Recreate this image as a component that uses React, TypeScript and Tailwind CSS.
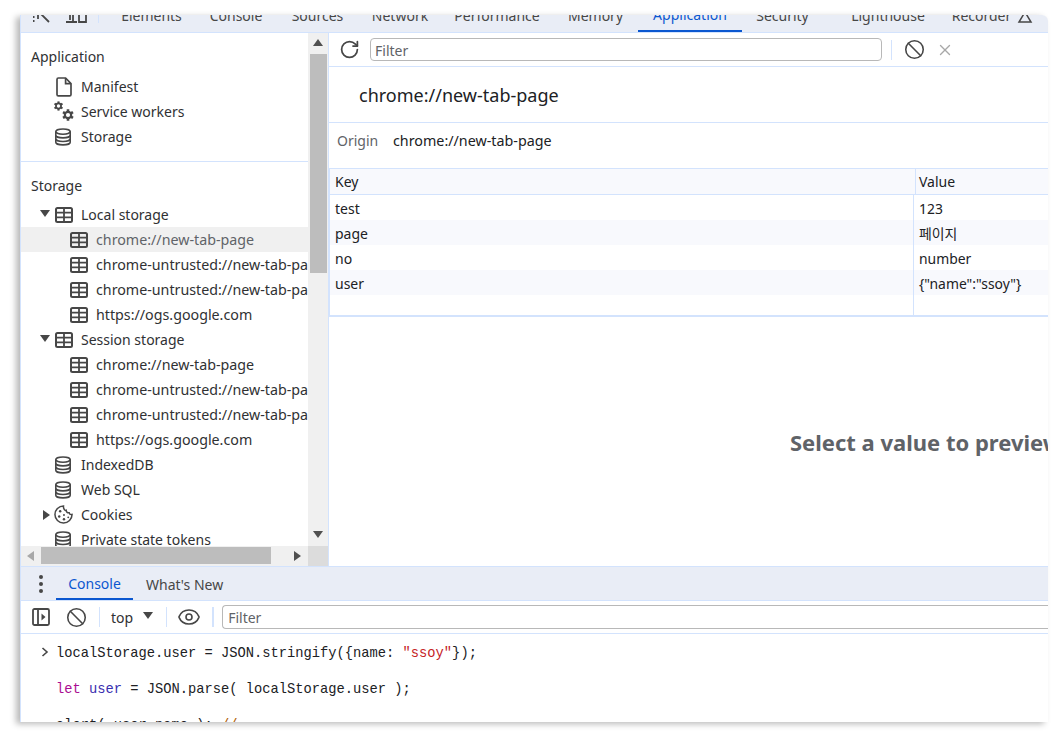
import { Ban, Eye, RotateCw, X } from "lucide-react";

const uiFont = "font-['Noto_Sans','Open_Sans',sans-serif]";

function TableIcon() {
  return (
    <svg width="18" height="16" viewBox="0 0 18 16" fill="none" stroke="#474747" strokeWidth="2" className="shrink-0">
      <rect x="1" y="1" width="16" height="14" rx="1.5" />
      <path d="M1 5.6h16M1 10.4h16M9 1v14" strokeWidth="1.8" />
    </svg>
  );
}

function DatabaseIcon() {
  return (
    <svg width="18" height="18" viewBox="0 0 18 18" fill="none" stroke="#474747" strokeWidth="1.6" className="shrink-0">
      <ellipse cx="9" cy="3.6" rx="7.2" ry="2.6" />
      <path d="M1.8 3.6v10.6c0 1.5 3.2 2.7 7.2 2.7s7.2-1.2 7.2-2.7V3.6" />
      <path d="M1.8 7.2c0 1.5 3.2 2.7 7.2 2.7s7.2-1.2 7.2-2.7M1.8 10.8c0 1.5 3.2 2.7 7.2 2.7s7.2-1.2 7.2-2.7" />
    </svg>
  );
}

function FileIcon() {
  return (
    <svg width="16" height="20" viewBox="0 0 16 20" fill="none" stroke="#474747" strokeWidth="1.7" className="shrink-0">
      <path d="M2.4 1h7.2L15 6.6v10.8a1.4 1.4 0 0 1-1.4 1.4H2.4A1.4 1.4 0 0 1 1 17.4V2.4A1.4 1.4 0 0 1 2.4 1z" />
      <path d="M9.6 1v5.600H15" />
    </svg>
  );
}

function GearShape({ x, y, r }: { x: number; y: number; r: number }) {
  const teeth = [0, 60, 120];
  return (
    <g transform={`translate(${x} ${y})`}>
      {teeth.map((angle) => (
        <rect key={angle} x={-r * 0.26} y={-r * 1.15} width={r * 0.52} height={r * 2.3} fill="#474747" transform={`rotate(${angle})`} />
      ))}
      <circle r={r * 0.85} fill="#474747" />
      <circle r={r * 0.42} fill="#fff" />
    </g>
  );
}

function GearsIcon() {
  return (
    <svg width="22" height="22" viewBox="0 0 22 22" className="shrink-0">
      <GearShape x={5.5} y={5} r={4} />
      <GearShape x={15} y={14} r={5} />
    </svg>
  );
}

function CookieIcon() {
  return (
    <svg width="19" height="19" viewBox="0 0 20 20" fill="none" stroke="#474747" strokeWidth="1.6" className="-ml-[3px] shrink-0">
      <path d="M10 1a9 9 0 1 0 9 9c-1.600.3-2.700-.4-3-1.800-1.700.3-3.200-.8-3.200-2.600C11 6.200 9.700 3 10 1z" />
      <g fill="#474747" stroke="none">
        <circle cx="6.5" cy="6.5" r="1.3" />
        <circle cx="5.5" cy="12" r="1.3" />
        <circle cx="10.5" cy="10.5" r="1" />
        <circle cx="10.5" cy="15" r="1.3" />
        <circle cx="15" cy="13" r="1" />
      </g>
    </svg>
  );
}

function Triangle({ dir }: { dir: "down" | "right" | "up" | "left" }) {
  const points = {
    down: "0,0 10,0 5,7",
    up: "0,7 10,7 5,0",
    right: "1,0 8,5 1,10",
    left: "8,0 1,5 8,10",
  }[dir];
  return (
    <svg width="10" height="10" viewBox="0 0 10 10" className="shrink-0" preserveAspectRatio="xMidYMid meet">
      <polygon points={points} fill="currentColor" />
    </svg>
  );
}

const topTabs = [
  { label: "Elements", width: "w-[89px]" },
  { label: "Console", width: "w-[80px]" },
  { label: "Sources", width: "w-[83px]" },
  { label: "Network", width: "w-[82px]" },
  { label: "Performance", width: "w-[112px]" },
  { label: "Memory", width: "w-[85px]" },
  { label: "Application", width: "w-[104px]", active: true },
  { label: "Security", width: "w-[81px]" },
  { label: "Lighthouse", width: "ml-[14px] w-[102px]" },
  { label: "Recorder", width: "w-[85px]" },
];

function TreeRow({ indent, icon, label, arrow, muted, selected, url, gap }: {
  indent: string;
  icon: React.ReactNode;
  label: string;
  arrow?: "down" | "right";
  muted?: boolean;
  selected?: boolean;
  url?: boolean;
  gap?: string;
}) {
  return (
    <div className={`flex h-[25px] items-center whitespace-nowrap ${indent} ${selected ? "bg-[#f0f0f0]" : ""}`}>
      {arrow && <span className="mr-[5px] text-[#474747]"><Triangle dir={arrow} /></span>}
      {icon}
      <span className={`${gap ?? "ml-[8px]"} ${url ? "text-[14.25px]" : ""} ${muted ? "text-[#5f6368]" : "text-[#303133]"}`}>{label}</span>
    </div>
  );
}

function OriginRows() {
  return (
    <>
      <TreeRow indent="pl-[49px]" icon={<TableIcon />} label="chrome-untrusted://new-tab-page/" url />
      <TreeRow indent="pl-[49px]" icon={<TableIcon />} label="chrome-untrusted://new-tab-page/" url />
      <TreeRow indent="pl-[49px]" icon={<TableIcon />} label="https://ogs.google.com" url />
    </>
  );
}

function Sidebar() {
  return (
    <div className="flex h-[533px] w-[308px] shrink-0 flex-col border-r border-[#d3e3fd] text-[14px]">
      <div className="flex min-h-0 flex-1">
        <div className="w-[287px] shrink-0 overflow-hidden">
          <div className="flex h-[41px] items-center pl-[10px] pt-[5px] text-[#303133]">Application</div>
          <TreeRow indent="pl-[35px]" icon={<FileIcon />} label="Manifest" gap="ml-[9px]" />
          <div className="flex h-[25px] items-center pl-[32px] text-[#303133]">
            <GearsIcon />
            <span className="ml-[6px]">Service workers</span>
          </div>
          <TreeRow indent="pl-[33px]" icon={<DatabaseIcon />} label="Storage" gap="ml-[9px]" />
          <div className="mt-[12px] border-t border-[#d3e3fd]" />
          <div className="flex h-[46px] items-center pl-[10px] text-[#303133]">Storage</div>
          <div className="-mt-[6px]" />
          <TreeRow indent="pl-[19px]" icon={<TableIcon />} label="Local storage" arrow="down" />
          <TreeRow indent="pl-[49px]" icon={<TableIcon />} label="chrome://new-tab-page" muted selected url />
          <OriginRows />
          <TreeRow indent="pl-[19px]" icon={<TableIcon />} label="Session storage" arrow="down" />
          <TreeRow indent="pl-[49px]" icon={<TableIcon />} label="chrome://new-tab-page" url />
          <OriginRows />
          <TreeRow indent="pl-[33px]" icon={<DatabaseIcon />} label="IndexedDB" gap="ml-[9px]" />
          <TreeRow indent="pl-[33px]" icon={<DatabaseIcon />} label="Web SQL" gap="ml-[9px]" />
          <TreeRow indent="pl-[21px]" icon={<CookieIcon />} label="Cookies" arrow="right" gap="ml-[8px]" />
          <TreeRow indent="pl-[33px]" icon={<DatabaseIcon />} label="Private state tokens" gap="ml-[9px]" />
        </div>
        <div className="flex w-[20px] shrink-0 flex-col items-center justify-between bg-[#f0f0f0] text-[#505050]">
          <div className="flex h-[21px] items-center"><Triangle dir="up" /></div>
          <div className="mb-auto h-[219px] w-[17px] bg-[#bdbdbd]" />
          <div className="flex h-[20px] items-center"><Triangle dir="down" /></div>
        </div>
      </div>
      <div className="flex h-[20px] shrink-0 bg-[#f0f0f0]">
        <div className="flex w-[20px] items-center justify-center text-[#a8a8a8]"><Triangle dir="left" /></div>
        <div className="mt-[1px] h-[17px] w-[230px] bg-[#bdbdbd]" />
        <div className="flex flex-1 items-center justify-end pr-[5px] text-[#505050]"><Triangle dir="right" /></div>
        <div className="w-[20px] bg-[#dcdcdc]" />
      </div>
    </div>
  );
}

const storageRows = [
  { key: "test", value: "123" },
  { key: "page", value: "페이지", alt: true },
  { key: "no", value: "number" },
  { key: "user", value: "{\"name\":\"ssoy\"}", alt: true },
];

function StoragePanel() {
  return (
    <div className="flex min-w-0 flex-1 flex-col overflow-hidden text-[14px] text-[#202124]">
      <div className="flex h-[34px] shrink-0 items-center border-b border-[#d3e3fd]">
        <RotateCw size={21} strokeWidth={2} className="ml-[10px] text-[#474747]" />
        <div className="ml-[10px] flex h-[23px] w-[512px] items-center rounded-[4px] border border-[#b8b8b8] pl-[4px] pt-[1px] text-[#5f6368]">Filter</div>
        <div className="ml-[9px] h-[20px] w-px bg-[#d3e3fd]" />
        <Ban size={21} strokeWidth={1.8} className="ml-[12px] text-[#474747]" />
        <X size={18} strokeWidth={1.8} className="ml-[11px] text-[#a8a8a8]" />
      </div>
      <div className="flex h-[56px] shrink-0 items-center border-b border-[#d3e3fd] pl-[30px] pt-[2px] text-[18px]">chrome://new-tab-page</div>
      <div className="flex h-[46px] shrink-0 items-start border-b border-[#d3e3fd] pl-[8px] pt-[7px]">
        <span className="w-[56px] text-[#5f6368]">Origin</span>
        <span className="text-[14.3px]">chrome://new-tab-page</span>
      </div>
      <div className="shrink-0 border-b-2 border-l border-[#d3e3fd]">
        <div className="flex h-[26px] border-b border-[#d3e3fd] bg-[#f8f9fd]">
          <div className="flex w-[586px] shrink-0 items-center border-r border-[#d3e3fd] pl-[5px]">Key</div>
          <div className="flex items-center pl-[3px]">Value</div>
        </div>
        {storageRows.map((row) => (
          <div key={row.key} className={`flex h-[25px] ${row.alt ? "bg-[#f8f9fd]" : ""}`}>
            <div className="flex w-[584px] shrink-0 items-center border-r border-[#d3e3fd] pl-[5px] pt-[2px]">{row.key}</div>
            <div className="flex items-center pl-[5px] pt-[3px] text-[13.9px] font-['Noto_Sans','Noto_Sans_CJK_KR',sans-serif]">{row.value}</div>
          </div>
        ))}
        <div className="flex h-[20px]">
          <div className="w-[584px] shrink-0 border-r border-[#d3e3fd]" />
        </div>
      </div>
      <div className="flex min-h-0 flex-1 items-center whitespace-nowrap pl-[461px] pt-[2px] text-[22px] font-bold text-[#5f6368]">
        Select a value to preview
      </div>
    </div>
  );
}

function ConsoleDrawer() {
  return (
    <div className="flex min-h-0 flex-1 flex-col overflow-hidden border-t border-[#d3e3fd] text-[14px]">
      <div className="flex h-[34px] shrink-0 items-stretch border-b border-[#d3e3fd] bg-[#e9edf6]">
        <div className="flex w-[35px] shrink-0 items-center justify-center pl-[4px]">
          <div className="flex flex-col gap-[3px]">
            <span className="size-[4px] rounded-full bg-[#474747]" />
            <span className="size-[4px] rounded-full bg-[#474747]" />
            <span className="size-[4px] rounded-full bg-[#474747]" />
          </div>
        </div>
        <div className="flex w-[77px] items-center justify-center border-b-2 border-[#0b57d0] pt-[2px] text-[#0b57d0]">Console</div>
        <div className="flex items-center pl-[13px] pt-[2px] text-[#474747]">What's New</div>
      </div>
      <div className="flex h-[33px] shrink-0 items-center border-b border-[#d3e3fd]">
        <svg width="18" height="18" viewBox="0 0 18 18" fill="none" stroke="#474747" strokeWidth="1.8" className="ml-[11px] shrink-0">
          <rect x="1" y="1" width="16" height="16" rx="1.5" />
          <path d="M6 1v16" />
          <polygon points="9.5,5.5 13.5,9 9.5,12.5" fill="#474747" stroke="none" />
        </svg>
        <Ban size={21} strokeWidth={1.8} className="ml-[16px] text-[#474747]" />
        <div className="ml-[12px] h-[20px] w-px bg-[#d3e3fd]" />
        <span className="ml-[11px] pt-[1px] text-[#303133]">top</span>
        <span className="ml-[10px] text-[#474747]"><Triangle dir="down" /></span>
        <div className="ml-[13px] h-[20px] w-px bg-[#d3e3fd]" />
        <Eye size={24} strokeWidth={1.6} className="ml-[10px] text-[#474747]" />
        <div className="ml-[11px] h-[20px] w-[2px] bg-[#d3e3fd]" />
        <div className="ml-[8px] flex h-[24px] flex-1 items-center rounded-l-[4px] border border-r-0 border-[#b8b8b8] pl-[5px] pt-[1px] text-[#5f6368]">Filter</div>
      </div>
      <div className="relative flex-1 whitespace-pre pl-[35px] pt-[2px] font-['Liberation_Mono',monospace] text-[13.75px] leading-[36px] text-[#202124]">
        <svg width="8" height="10" viewBox="0 0 8 10" fill="none" stroke="#474747" strokeWidth="1.6" className="absolute left-[20px] top-[13px]">
          <path d="M1.5 1l4.5 4-4.500 4" />
        </svg>
        <div>
          localStorage.user = JSON.stringify({"{"}name: <span className="text-[#c5221f]">"ssoy"</span>{"}"});
        </div>
        <div>
          <span className="text-[#aa0d91]">let</span> <span className="text-[#3a2fb0]">user</span> = JSON.parse( localStorage.user );
        </div>
        <div>
          alert( user.name ); <span className="text-[#b06000]">//</span>
        </div>
      </div>
    </div>
  );
}

export default function App() {
  return (
    <div className={`h-[737px] w-[1063px] overflow-hidden bg-white pb-[15px] pl-[20px] pr-[15px] pt-[15px] ${uiFont}`}>
      <div className="flex h-[707px] w-[1028px] flex-col overflow-hidden rounded-tr-[6px] border-l border-[#d3e3fd] bg-white shadow-[-4px_2px_6px_rgba(0,0,0,0.28)]">
        <div className="flex h-[18px] shrink-0 items-end overflow-hidden border-b border-[#d3e3fd] bg-[#e9edf6] text-[14px] text-[#474747]">
          <div className="flex h-[34px] w-[86px] shrink-0 items-center pl-[11px] text-[#474747]">
            <svg width="20" height="18" viewBox="0 0 20 18" fill="none" stroke="#474747" strokeWidth="1.8" className="shrink-0">
              <path d="M1 3h1.500M1 7h1.500M1 11h1.500M1 15h1.500M5 1h1.500M10 1h1.500M6 5l11 11M6 5v8M6 5h8" />
            </svg>
            <svg width="21" height="18" viewBox="0 0 21 18" fill="none" stroke="#474747" strokeWidth="1.8" className="ml-[14px] shrink-0">
              <path d="M0 16h11M4 5v9M7 5v11M13 5h7v11h-7z" />
            </svg>
            <div className="ml-[11px] h-[16px] w-px shrink-0 bg-[#d3e3fd]" />
          </div>
          {topTabs.map((tab) => (
            <div
              key={tab.label}
              className={`flex h-[34px] shrink-0 items-center justify-center ${tab.width} ${tab.active ? "border-b-2 border-[#0b57d0] text-[#0b57d0]" : ""}`}
            >
              {tab.label}
            </div>
          ))}
          <svg width="16" height="14" viewBox="0 0 16 14" fill="none" stroke="#474747" strokeWidth="1.5" className="-ml-[7px] mb-[8px] shrink-0">
            <path d="M8 2l6 10H2z" />
          </svg>
        </div>
        <div className="flex shrink-0">
          <Sidebar />
          <StoragePanel />
        </div>
        <ConsoleDrawer />
      </div>
    </div>
  );
}
